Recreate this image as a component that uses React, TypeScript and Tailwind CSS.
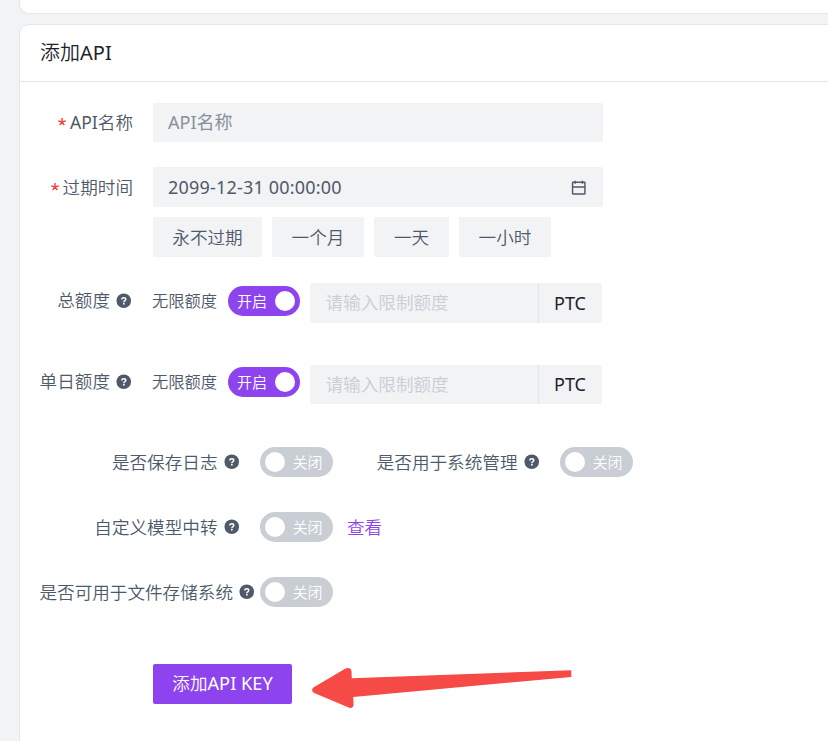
import React, { useState } from 'react';
import clsx from 'clsx';

const HelpIcon: React.FC = () => (
  <svg viewBox="0 0 48 48" className="ml-[5px] h-[17.5px] w-[17.5px] shrink-0" fill="none">
    <circle cx="24" cy="24" r="20" fill="#4e5969" />
    <path
      d="M18.6 20.8c0-3.4 2.3-5.2 5.5-5.2 3.1 0 5.5 1.8 5.5 4.6 0 3.9-5.4 3.8-5.4 7.2v.6"
      stroke="#fff"
      strokeWidth="4"
    />
    <rect x="22" y="30" width="4.4" height="4.4" fill="#fff" />
  </svg>
);

const CalendarIcon: React.FC = () => (
  <svg viewBox="0 0 48 48" className="mt-px h-[17.5px] w-[17.5px]" fill="none" stroke="#4e5969" strokeWidth="4">
    <path d="M7 22h34M14 5v8m20-8v8M8 41h32a1 1 0 0 0 1-1V10a1 1 0 0 0-1-1H8a1 1 0 0 0-1 1v30a1 1 0 0 0 1 1Z" />
  </svg>
);

interface SwitchProps {
  checked: boolean;
  onChange: (value: boolean) => void;
}

const Switch: React.FC<SwitchProps> = ({ checked, onChange }) => (
  <button
    type="button"
    role="switch"
    aria-checked={checked}
    onClick={() => onChange(!checked)}
    className={clsx(
      'flex h-[30px] shrink-0 items-center justify-between rounded-full text-[15px] leading-none text-white',
      checked ? 'w-[72px] flex-row-reverse bg-[#8d44ef] pr-[5px] pl-[9px]' : 'w-[73px] bg-[#c9cdd4] pr-[10.5px] pl-[5px]',
    )}
  >
    <span className="h-5 w-5 rounded-full bg-white" />
    <span>{checked ? '开启' : '关闭'}</span>
  </button>
);

interface QuotaRowProps {
  label: string;
  className: string;
  inputClassName: string;
}

const QuotaRow: React.FC<QuotaRowProps> = ({ label, className, inputClassName }) => {
  const [unlimited, setUnlimited] = useState(true);

  return (
    <div className={clsx('flex h-10 items-start', className)}>
      <div className="flex h-9 w-[112.5px] items-center justify-end">
        <span className="pb-0.5">{label}</span>
        <HelpIcon />
      </div>
      <div className="ml-[19.5px] flex h-9 items-center">
        <span className="w-[76px] text-[16.3px]">无限额度</span>
        <Switch checked={unlimited} onChange={setUnlimited} />
      </div>
      <div className={clsx('ml-[10px] flex w-[292px] overflow-hidden rounded-[2px] bg-[#f2f3f5]', inputClassName)}>
        <input
          disabled={unlimited}
          placeholder="请输入限制额度"
          className="w-[228px] px-[15.5px] pb-0.5 placeholder:text-[#c9cdd4]"
        />
        <span className="flex flex-1 items-center border-l border-[#e5e6eb] pb-px pl-[15px] text-[18px] font-normal text-[#1d2129]">
          PTC
        </span>
      </div>
    </div>
  );
};

interface ToggleItemProps {
  label: string;
  wide?: boolean;
}

const ToggleItem: React.FC<ToggleItemProps> = ({ label, wide }) => {
  const [checked, setChecked] = useState(false);

  return (
    <div className="flex h-[30px] items-center">
      <div className={clsx('flex shrink-0 items-center justify-end', wide ? 'mr-[4.5px] w-[215.5px]' : 'mr-5 w-[200px]')}>
        <span className="whitespace-nowrap">{label}</span>
        <HelpIcon />
      </div>
      <Switch checked={checked} onChange={setChecked} />
    </div>
  );
};

const presets = [
  { label: '永不过期', width: 'w-[109px]' },
  { label: '一个月', width: 'w-[92px]' },
  { label: '一天', width: 'w-[75px]' },
  { label: '一小时', width: 'w-[92px]' },
];

const Required: React.FC = () => (
  <svg viewBox="0 0 8 8" className="mr-[3.5px] h-2 w-2" stroke="#f53f3f" strokeWidth="1.4">
    <path d="M4 0v4M.2 2.8 4 4l3.8-1.2M1.7 7.2 4 4l2.3 3.2" fill="none" />
  </svg>
);

export default function App() {
  return (
    <div className="h-[741px] w-[828px] overflow-hidden bg-[#f2f3f5] pl-[19px] font-['Noto_Sans','Noto_Sans_CJK_SC',sans-serif] text-[17.6px] leading-[26px] font-[350] text-[#4e5969]">
      <div className="-mr-5 h-[14px] rounded-b-[10px] border border-t-0 border-[#e5e6eb] bg-white" />

      <div className="relative mt-[10px] -mr-5 h-[740px] rounded-t-[10px] border border-[#e5e6eb] bg-white">
        <div className="flex h-[57px] items-center border-b border-[#e5e6eb] pl-5 text-[20px] text-[#1d2129]">
          添加<span className="font-normal">API</span>
        </div>

        <div className="pt-[21px]">
          {/* Name */}
          <div className="flex h-[39px] items-center">
            <div className="flex w-[113px] items-center justify-end pb-px">
              <Required />
              <span>
                <span className="font-normal">API</span>名称
              </span>
            </div>
            <input
              placeholder="API名称"
              className="ml-5 h-full w-[450px] rounded-[2px] bg-[#f2f3f5] px-[15px] pb-0.5 text-[18px] font-normal placeholder:text-[#86909c]"
            />
          </div>

          {/* Expiry date */}
          <div className="mt-[25px] flex h-10 items-center">
            <div className="flex w-[113px] items-center justify-end">
              <Required />
              <span>过期时间</span>
            </div>
            <div className="ml-5 flex h-full w-[450px] items-center justify-between rounded-[2px] bg-[#f2f3f5] pr-4 pl-[15px]">
              <span className="text-[18px] font-normal tracking-[0.2px]">2099-12-31 00:00:00</span>
              <CalendarIcon />
            </div>
          </div>
          <div className="mt-[10px] ml-[133px] flex gap-[10px]">
            {presets.map(preset => (
              <button key={preset.label} type="button" className={clsx('h-10 rounded-[2px] bg-[#f2f3f5]', preset.width)}>
                {preset.label}
              </button>
            ))}
          </div>

          {/* Quotas */}
          <QuotaRow label="总额度" className="mt-[26px]" inputClassName="h-10" />
          <QuotaRow label="单日额度" className="mt-[41px]" inputClassName="mt-px h-[39px]" />

          {/* Switches */}
          <div className="mt-[43px] ml-5 flex flex-col gap-[35px]">
            <div className="flex">
              <ToggleItem label="是否保存日志" />
              <div className="ml-[7px]">
                <ToggleItem label="是否用于系统管理" />
              </div>
            </div>
            <div className="flex items-center">
              <ToggleItem label="自定义模型中转" />
              <a className="ml-[14px] text-[#8d44ef]">查看</a>
            </div>
            <ToggleItem label="是否可用于文件存储系统" wide />
          </div>

          <button type="button" className="mt-[57px] ml-[133px] h-10 w-[139px] rounded-[2px] bg-[#8d44ef] pb-0.5 text-white">
            添加<span className="text-[18.2px] font-normal">API KEY</span>
          </button>
        </div>

        {/* Arrow pointing at the submit button */}
        <svg className="absolute top-[635px] left-[286px]" width="275" height="55" viewBox="306 660 275 55" fill="#f54a45">
          <path d="M571.3 670.2V677L353.2 697l.4 7.4c.1 2.9-2.4 4.3-4.9 3.1L314.2 692.9c-2.6-1.2-2.7-4.2-.4-5.6L345.5 668.6c2.8-1.6 5.9-.4 6 2.6l.3 7Z" />
        </svg>
      </div>
    </div>
  );
}
